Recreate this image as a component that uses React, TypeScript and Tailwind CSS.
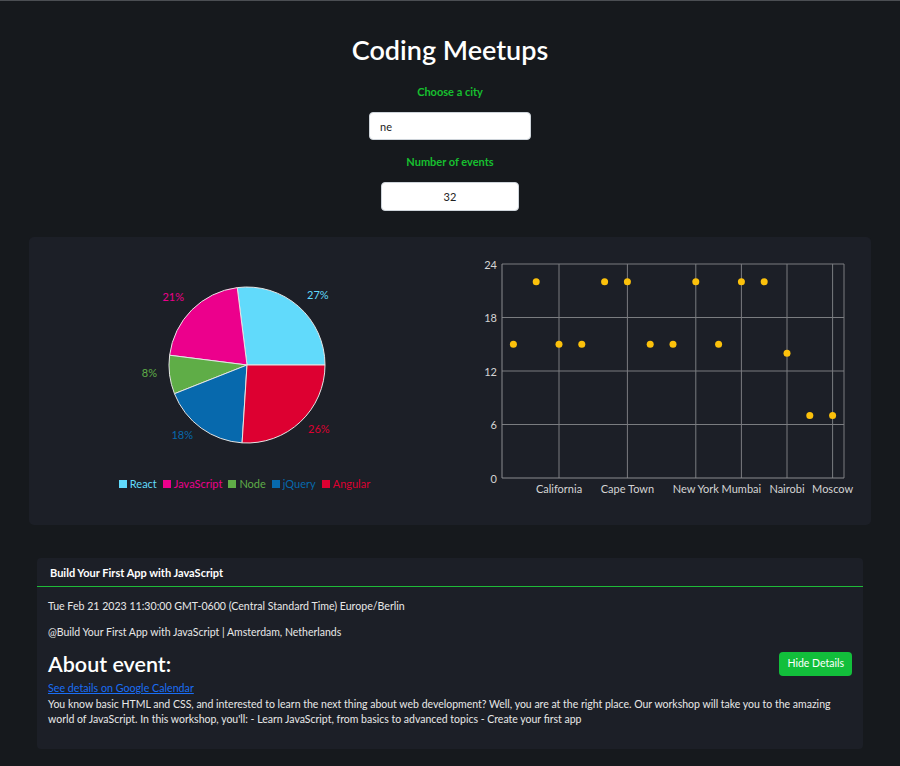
import { FC } from "react";

const slices = [
  { name: "React", value: 27, color: "#61dafb" },
  { name: "JavaScript", value: 21, color: "#ec008c" },
  { name: "Node", value: 8, color: "#5fad47" },
  { name: "jQuery", value: 18, color: "#0769ad" },
  { name: "Angular", value: 26, color: "#dd0031" },
];

// label spots measured off the chart (x, y, anchor)
const labelSpots: [number, number, "start" | "end"][] = [
  [278, 57, "start"],
  [155, 59, "end"],
  [128, 135, "end"],
  [164, 197, "end"],
  [279, 191, "start"],
];

const cities = [15, 22, 15, 15, 22, 22, 15, 15, 22, 15, 22, 22, 14, 7, 7];
const cityTicks: Record<number, string> = {
  2: "California",
  5: "Cape Town",
  8: "New York",
  10: "Mumbai",
  12: "Nairobi",
  14: "Moscow",
};

const PieChart: FC = () => {
  const cx = 218;
  const cy = 128;
  const r = 78;
  let angle = 0;
  const paths = slices.map((s) => {
    const start = angle;
    const sweep = (s.value / 100) * 360;
    angle += sweep;
    const a0 = (start * Math.PI) / 180;
    const a1 = (angle * Math.PI) / 180;
    const x0 = cx + r * Math.cos(a0);
    const y0 = cy - r * Math.sin(a0);
    const x1 = cx + r * Math.cos(a1);
    const y1 = cy - r * Math.sin(a1);
    const large = sweep > 180 ? 1 : 0;
    return {
      ...s,
      d: `M${cx},${cy} L${x0},${y0} A${r},${r} 0 ${large} 0 ${x1},${y1} Z`,
    };
  });

  return (
    <div className="flex flex-col">
      <svg width="421" height="236" viewBox="0 0 421 236">
        {paths.map((p) => (
          <path key={p.name} d={p.d} fill={p.color} stroke="#e5e5e5" strokeWidth="1" />
        ))}
        {paths.map((p, i) => (
          <text
            key={p.name}
            x={labelSpots[i][0]}
            y={labelSpots[i][1]}
            textAnchor={labelSpots[i][2]}
            dominantBaseline="central"
            fill={p.color}
            fontSize="11"
          >
            {p.value}%
          </text>
        ))}
      </svg>
      <div className="flex justify-center items-center gap-[6px] pl-[10px] mt-[4px] text-[11px] leading-[14px]">
        {slices.map((s) => (
          <div key={s.name} className="flex items-center gap-[3px]">
            <span className="w-[8px] h-[8px] inline-block" style={{ backgroundColor: s.color }} />
            <span style={{ color: s.color }}>{s.name}</span>
          </div>
        ))}
      </div>
    </div>
  );
};

const ScatterChart: FC = () => {
  const left = 52;
  const right = 394;
  const top = 27;
  const bottom = 241;
  const band = (right - left) / cities.length;
  const yScale = (v: number) => bottom - (v / 24) * (bottom - top);

  return (
    <svg width="421" height="288" viewBox="0 0 421 288">
      {[6, 12, 18, 24].map((v) => (
        <line key={v} x1={left} x2={right} y1={yScale(v)} y2={yScale(v)} stroke="#7a7c80" strokeWidth="1" />
      ))}
      {Object.keys(cityTicks).map((k) => {
        const x = left + band * (Number(k) + 0.5);
        return <line key={k} x1={x} x2={x} y1={top} y2={bottom} stroke="#7a7c80" strokeWidth="1" />;
      })}
      <line x1={right} x2={right} y1={top} y2={bottom} stroke="#7a7c80" strokeWidth="1" />
      <line x1={left} x2={left} y1={top} y2={bottom} stroke="#8a8c90" strokeWidth="1" />
      <line x1={left} x2={right} y1={bottom} y2={bottom} stroke="#8a8c90" strokeWidth="1" />
      {[0, 6, 12, 18, 24].map((v) => (
        <text key={v} x={left - 5} y={yScale(v)} textAnchor="end" dominantBaseline="central" fill="#d4d4d4" fontSize="11">
          {v}
        </text>
      ))}
      {Object.entries(cityTicks).map(([k, name]) => (
        <text
          key={k}
          x={left + band * (Number(k) + 0.5)}
          y={251}
          textAnchor="middle"
          dominantBaseline="central"
          fill="#d4d4d4"
          fontSize="11"
        >
          {name}
        </text>
      ))}
      {cities.map((v, i) => (
        <circle key={i} cx={left + band * (i + 0.5)} cy={yScale(v)} r="3.5" fill="#fcc10b" />
      ))}
    </svg>
  );
};

const App: FC = () => {
  return (
    <div className="min-h-screen bg-[#16191d] border-t border-[#4b4e53] font-['Lato',sans-serif] text-white pb-[18px]">
      <div className="flex flex-col items-center pt-[31px]">
        <h1 className="text-[27px] leading-[36px] font-semibold">Coding Meetups</h1>
        <label className="mt-[16px] text-[11px] leading-[16px] font-bold text-[#16c02f]">Choose a city</label>
        <input
          defaultValue="ne"
          className="mt-[12px] w-[162px] h-[28px] rounded-[4px] bg-white border border-[#ced4da] px-[10px] text-[11px] text-[#222]"
        />
        <label className="mt-[14px] text-[11px] leading-[16px] font-bold text-[#16c02f]">Number of events</label>
        <input
          defaultValue="32"
          className="mt-[12px] w-[138px] h-[29px] rounded-[4px] bg-white border border-[#ced4da] text-center text-[11px] text-[#222]"
        />
      </div>

      <div className="mx-[29px] mt-[26px] h-[288px] rounded-[5px] bg-[#1c1f27] flex">
        <PieChart />
        <ScatterChart />
      </div>

      <div className="mx-[37px] mt-[33px] rounded-[4px] bg-[#1c1f27]">
        <div className="h-[29px] px-[13px] pt-[2px] flex items-center border-b border-[#1fbb38] text-[11px] font-bold">
          Build Your First App with JavaScript
        </div>
        <div className="px-[11px] pt-[10px] pb-[22px] text-[#e8e8e8]">
          <p className="text-[10.6px] leading-[18px]">
            Tue Feb 21 2023 11:30:00 GMT-0600 (Central Standard Time) Europe/Berlin
          </p>
          <p className="mt-[8px] text-[10.5px] leading-[18px]">
            @Build Your First App with JavaScript | Amsterdam, Netherlands
          </p>
          <div className="mt-[9px] flex justify-between items-center">
            <h2 className="text-[21.5px] leading-[28px] font-semibold text-white">About event:</h2>
            <button className="h-[24px] px-[8px] rounded-[4px] bg-[#12bf3b] text-[10.5px] text-white">
              Hide Details
            </button>
          </div>
          <a href="#" className="block mt-[2px] text-[10.7px] leading-[15px] text-[#1a6ef5] underline">
            See details on Google Calendar
          </a>
          <p className="mt-[2px] text-[10.5px] leading-[15px]">
            You know basic HTML and CSS, and interested to learn the next thing about web development? Well, you are at
            the right place. Our workshop will take you to the amazing world of JavaScript. In this workshop, you'll: -
            Learn JavaScript, from basics to advanced topics - Create your first app
          </p>
        </div>
      </div>
    </div>
  );
};

export default App;
